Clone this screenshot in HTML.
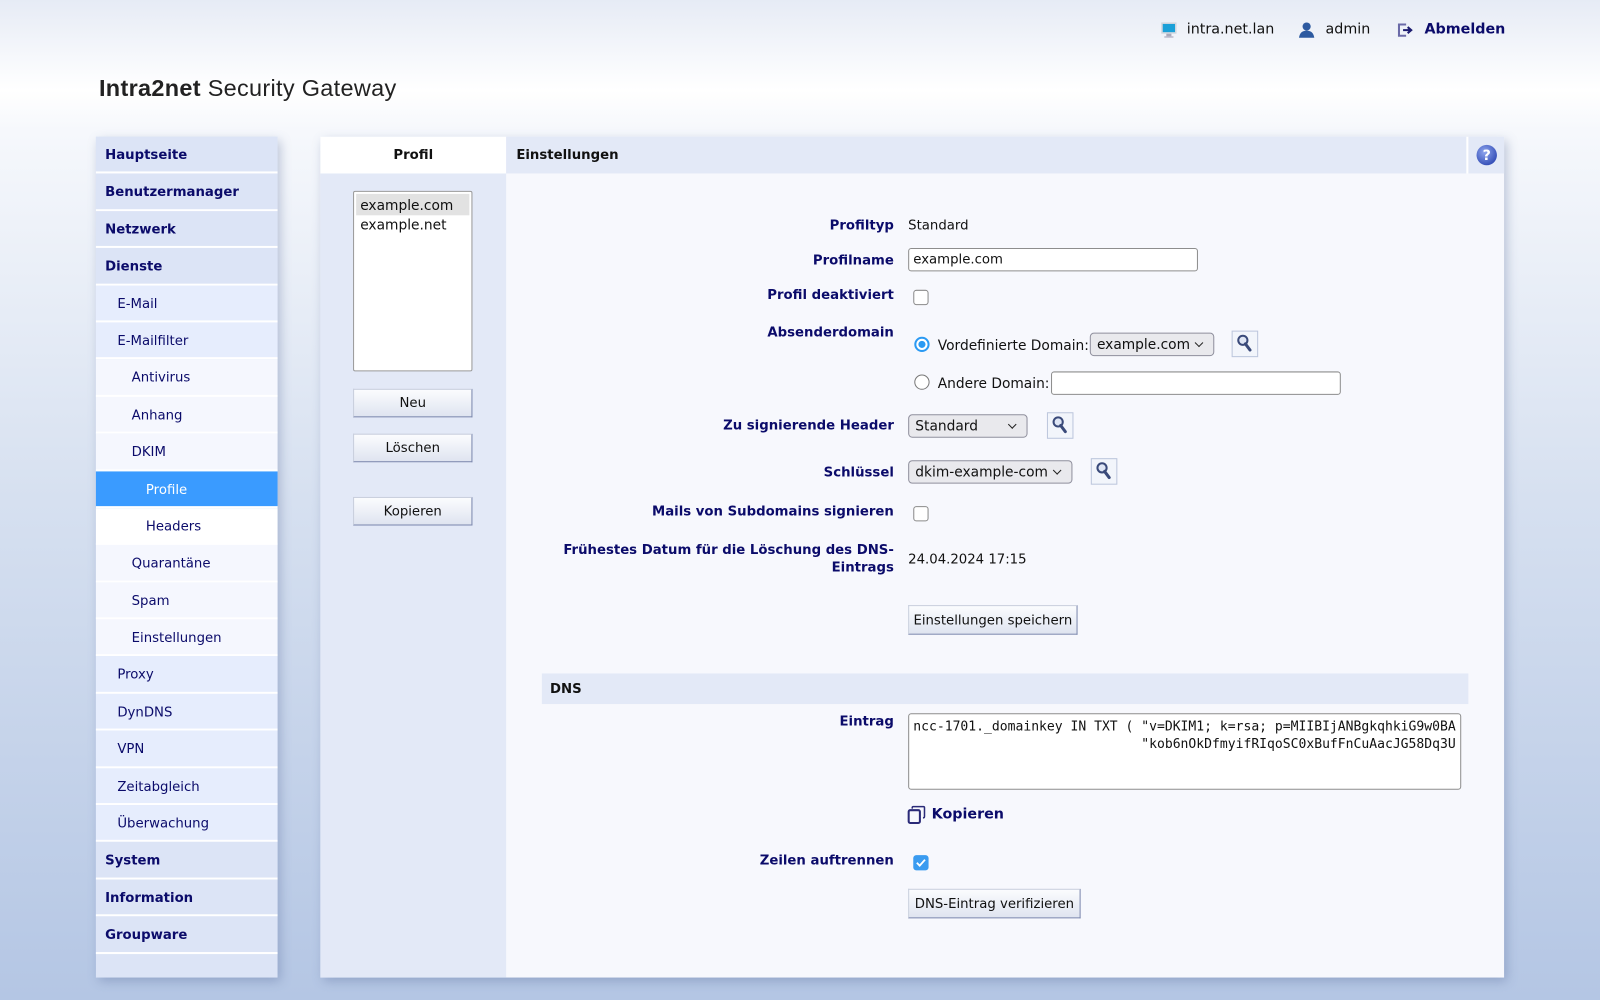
<!DOCTYPE html>
<html><head><meta charset="utf-8"><style>
*{box-sizing:border-box;margin:0;padding:0}
body{width:1600px;height:1000px;overflow:hidden;font-family:"DejaVu Sans","Liberation Sans",sans-serif;font-size:13px;color:#111;
background:linear-gradient(to bottom,#e6ebf5 0px,#ffffff 90px,#f6f8fc 130px,#d6e0f0 500px,#b4c6e4 1000px);}
#w{position:absolute;left:0;top:0;width:1568px;height:980px;transform:scale(1.020408);transform-origin:0 0}
.a{position:absolute}
.top{top:21px;font-size:14px;color:#111}
.logo{left:97px;top:73px;font-family:"Liberation Sans",sans-serif;font-size:23px;color:#222;letter-spacing:0.3px}
.side{left:94px;top:134px;width:178px;height:824px;background:#dce4f6;box-shadow:3px 4px 10px rgba(80,100,150,.35)}
.side div{height:36.4px;line-height:38px;border-bottom:2px solid #fff;color:#0b0b6a;padding-left:9px;white-space:nowrap}
.l1{font-weight:bold;background:#dce4f6}
.l2{background:#e6edfd;padding-left:21px!important}
.l3{background:#f5f7fe;padding-left:35px!important}
.l4{background:#fff;padding-left:49px!important}
.sel{background:#3a9bff!important;color:#fff!important}
.panel{left:314px;top:134px;width:1160px;height:824px;background:#f7f8fd;box-shadow:3px 4px 10px rgba(80,100,150,.35)}
.pcol{left:0;top:0;width:182px;height:824px;background:#e3e9f7}
.btn{position:absolute;background:linear-gradient(#fbfcfe,#dfe4f0);border:1px solid #c9cfdd;border-bottom-color:#7b87ad;border-right-color:#7b87ad;text-align:center;font-size:13px;color:#111}
.lab{position:absolute;right:692px;text-align:right;font-weight:bold;color:#0b0b6a;white-space:nowrap;margin-top:2px}
.val{position:absolute;left:890px;white-space:nowrap;margin-top:2px}
.inp{position:absolute;background:#fff;border:1px solid #8d8d8d;border-radius:3px;height:23px;padding-left:4px;line-height:22px}
.selb{position:absolute;background:#e9e9ed;border:1px solid #8f8f9d;border-radius:4px;height:23px;line-height:22px;padding-left:6px;font-size:13.5px}
.selb:after{content:"";position:absolute;right:11px;top:6px;width:5px;height:5px;border-right:1.5px solid #222;border-bottom:1.5px solid #222;transform:rotate(45deg)}
.mag{position:absolute;width:26px;height:26px;border:1px solid #bcc6dc;background:#f2f5fb}
.cb{position:absolute;width:15px;height:15px;border:1.5px solid #8a8a8a;border-radius:3px;background:#fff}
</style></head><body><div id="w">
<div class="a top" style="left:1137px;top:21px"><svg width="17" height="17" viewBox="0 0 17 17"><rect x="1" y="1" width="15" height="11" fill="#cfd6de"/><rect x="2.5" y="2.5" width="12" height="8" fill="#1aa0d8"/><rect x="6" y="12" width="5" height="3" fill="#aab"/><rect x="4" y="14.5" width="9" height="1.5" fill="#bbc"/></svg></div>
<div class="a top" style="left:1163px">intra.net.lan</div>
<div class="a top" style="left:1272px;top:21px"><svg width="17" height="17" viewBox="0 0 17 17"><circle cx="8.5" cy="5" r="4" fill="#2d5aa0"/><path d="M1 16 Q2 9 8.5 9 Q15 9 16 16Z" fill="#2d5aa0"/></svg></div>
<div class="a top" style="left:1299px">admin</div>
<div class="a top" style="left:1369px;top:21px"><svg width="17" height="17" viewBox="0 0 17 17"><path d="M9 3H2V14H9" fill="none" stroke="#6a6aa8" stroke-width="2"/><path d="M6 8.5H13M10.5 5.5L14 8.5L10.5 11.5" fill="none" stroke="#1c1c70" stroke-width="2"/></svg></div>
<div class="a top" style="left:1396px;font-weight:bold;color:#0b0b6a">Abmelden</div>
<div class="a logo"><span style="font-weight:bold">Intra2net</span> Security Gateway</div>

<div class="a side">
<div class="l1">Hauptseite</div><div class="l1">Benutzermanager</div><div class="l1">Netzwerk</div><div class="l1">Dienste</div>
<div class="l2">E-Mail</div><div class="l2">E-Mailfilter</div>
<div class="l3">Antivirus</div><div class="l3">Anhang</div><div class="l3">DKIM</div>
<div class="l4 sel">Profile</div><div class="l4">Headers</div>
<div class="l3">Quarantäne</div><div class="l3">Spam</div><div class="l3">Einstellungen</div>
<div class="l2">Proxy</div><div class="l2">DynDNS</div><div class="l2">VPN</div><div class="l2">Zeitabgleich</div><div class="l2">Überwachung</div>
<div class="l1">System</div><div class="l1">Information</div><div class="l1">Groupware</div>
</div>

<div class="a panel">
<div class="a pcol"></div>
<div class="a" style="left:0;top:0;width:182px;height:36px;background:#fff;text-align:center;line-height:38px;font-weight:bold">Profil</div>
<div class="a" style="left:182px;top:0;width:978px;height:36px;background:#e3e9f7;line-height:38px;padding-left:10px;font-weight:bold"><span>Einstellungen</span>
<div class="a" style="left:941px;top:0;width:2px;height:36px;background:#fff"></div>
<svg class="a" style="left:950px;top:7px" width="22" height="22" viewBox="0 0 22 22"><defs><radialGradient id="g" cx="40%" cy="35%" r="65%"><stop offset="0" stop-color="#8fa6ee"/><stop offset="1" stop-color="#3650b8"/></radialGradient></defs><circle cx="11" cy="11" r="10" fill="url(#g)"/><text x="11" y="16" text-anchor="middle" font-family="DejaVu Sans" font-weight="bold" font-size="14" fill="#fff">?</text></svg>
</div>
<div class="a" style="left:32px;top:53px;width:117px;height:177px;background:#fff;border:1px solid #999;border-radius:2px;font-size:13.5px">
<div style="background:#e2e2e2;margin:2px;padding:4px 4px 0;height:21px">example.com</div><div style="padding:0 6px">example.net</div></div>
<div class="btn" style="left:32px;top:247px;width:117px;height:28px;line-height:28px">Neu</div>
<div class="btn" style="left:32px;top:291px;width:117px;height:28px;line-height:28px">Löschen</div>
<div class="btn" style="left:32px;top:353px;width:117px;height:28px;line-height:28px">Kopieren</div>
</div>

<div class="lab" style="top:212px">Profiltyp</div><div class="val" style="top:212px">Standard</div>
<div class="lab" style="top:246px">Profilname</div><div class="inp" style="left:890px;top:243px;width:284px">example.com</div>
<div class="lab" style="top:280px">Profil deaktiviert</div><div class="cb" style="left:895px;top:284px"></div>
<div class="lab" style="top:317px">Absenderdomain</div>
<div class="a" style="left:896px;top:330px;width:15px;height:15px;border-radius:50%;border:2px solid #2b9af3;background:#fff"><div style="margin:2px;width:7px;height:7px;border-radius:50%;background:#2b9af3"></div></div>
<div class="val" style="left:919px;top:329px;font-size:13.5px">Vordefinierte Domain:</div>
<div class="selb" style="left:1068px;top:326px;width:122px">example.com</div>
<div class="mag" style="left:1207px;top:324px"><svg width="24" height="24" viewBox="0 0 24 24"><circle cx="10" cy="8.5" r="4.5" fill="#dfe6f5" stroke="#3a4a7a" stroke-width="2"/><path d="M12.5 12L17 18" stroke="#3a4a7a" stroke-width="3" stroke-linecap="round"/></svg></div>
<div class="a" style="left:896px;top:367px;width:15px;height:15px;border-radius:50%;border:1.5px solid #777;background:#fff"></div>
<div class="val" style="left:919px;top:366px;font-size:13.5px">Andere Domain:</div>
<div class="inp" style="left:1030px;top:364px;width:284px"></div>
<div class="lab" style="top:408px">Zu signierende Header</div>
<div class="selb" style="left:890px;top:406px;width:117px">Standard</div>
<div class="mag" style="left:1026px;top:404px"><svg width="24" height="24" viewBox="0 0 24 24"><circle cx="10" cy="8.5" r="4.5" fill="#dfe6f5" stroke="#3a4a7a" stroke-width="2"/><path d="M12.5 12L17 18" stroke="#3a4a7a" stroke-width="3" stroke-linecap="round"/></svg></div>
<div class="lab" style="top:454px">Schlüssel</div>
<div class="selb" style="left:890px;top:451px;width:161px">dkim-example-com</div>
<div class="mag" style="left:1069px;top:449px"><svg width="24" height="24" viewBox="0 0 24 24"><circle cx="10" cy="8.5" r="4.5" fill="#dfe6f5" stroke="#3a4a7a" stroke-width="2"/><path d="M12.5 12L17 18" stroke="#3a4a7a" stroke-width="3" stroke-linecap="round"/></svg></div>
<div class="lab" style="top:492px">Mails von Subdomains signieren</div><div class="cb" style="left:895px;top:496px"></div>
<div class="lab" style="top:529px;line-height:17px">Frühestes Datum für die Löschung des DNS-<br>Eintrags</div>
<div class="val" style="top:539px">24.04.2024 17:15</div>
<div class="btn" style="left:890px;top:593px;width:166px;height:29px;line-height:29px">Einstellungen speichern</div>
<div class="a" style="left:531px;top:660px;width:908px;height:30px;background:#e3e9f7;padding-left:8px;line-height:32px;font-weight:bold">DNS</div>
<div class="lab" style="top:698px">Eintrag</div>
<div class="a" style="left:890px;top:699px;width:542px;height:75px;background:#fff;border:1px solid #8d8d8d;border-radius:3px;font-family:'DejaVu Sans Mono',monospace;font-size:12.8px;line-height:17px;padding:4px 4px;white-space:pre;overflow:hidden">ncc-1701._domainkey IN TXT ( "v=DKIM1; k=rsa; p=MIIBIjANBgkqhkiG9w0BA
                             "kob6nOkDfmyifRIqoSC0xBufFnCuAacJG58Dq3U</div>
<svg class="a" style="left:889px;top:789px" width="20" height="19" viewBox="0 0 20 19"><rect x="1.5" y="5" width="11" height="12.5" rx="1.5" fill="none" stroke="#2a2a78" stroke-width="2"/><path d="M5 3.5V2.5Q5 1.5 6 1.5H16Q17 1.5 17 2.5V11Q17 12.5 15.5 12.5" fill="none" stroke="#2a2a78" stroke-width="1.5"/></svg>
<div class="a" style="left:913px;top:790px;font-weight:bold;color:#0b0b6a;font-size:14px">Kopieren</div>
<div class="lab" style="top:834px">Zeilen auftrennen</div>
<div class="a" style="left:895px;top:838px;width:15px;height:15px;border-radius:3px;background:#3a9bf0"><svg width="15" height="15" viewBox="0 0 15 15"><path d="M3.5 7.5L6.3 10.3L11.5 4.5" fill="none" stroke="#fff" stroke-width="1.8"/></svg></div>
<div class="btn" style="left:890px;top:871px;width:169px;height:29px;line-height:29px">DNS-Eintrag verifizieren</div>
</div></body></html>
